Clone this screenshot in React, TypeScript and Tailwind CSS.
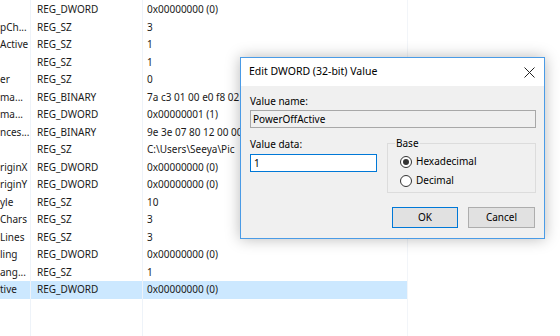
import React from "react";

const rows: [string, string, string][] = [
  ["", "REG_DWORD", "0x00000000 (0)"],
  ["pCh...", "REG_SZ", "3"],
  ["Active", "REG_SZ", "1"],
  ["", "REG_SZ", "1"],
  ["er", "REG_SZ", "0"],
  ["ma...", "REG_BINARY", "7a c3 01 00 e0 f8 02"],
  ["ma...", "REG_DWORD", "0x00000001 (1)"],
  ["nces...", "REG_BINARY", "9e 3e 07 80 12 00 00"],
  ["", "REG_SZ", "C:\\Users\\Seeya\\Pic"],
  ["riginX", "REG_DWORD", "0x00000000 (0)"],
  ["riginY", "REG_DWORD", "0x00000000 (0)"],
  ["yle", "REG_SZ", "10"],
  ["Chars", "REG_SZ", "3"],
  ["Lines", "REG_SZ", "3"],
  ["ling", "REG_DWORD", "0x00000000 (0)"],
  ["ang...", "REG_SZ", "1"],
  ["tive", "REG_DWORD", "0x00000000 (0)"],
];

const font = { fontFamily: '"Noto Sans", "Open Sans", sans-serif' };

export default function App() {
  return (
    <div
      className="relative w-[560px] h-[336px] overflow-hidden bg-white text-[#1a1a1a]"
      style={font}
    >
      {/* list */}
      <div className="relative w-[407px] h-full pt-[1px]">
        <div className="absolute left-[30px] top-0 bottom-0 w-px bg-[#eef3f9]" />
        <div className="absolute left-[142px] top-0 bottom-0 w-px bg-[#eef3f9]" />
        <div className="absolute left-[407px] top-0 bottom-0 w-px bg-[#f2f5f9]" />
        {rows.map(([n, t, d], i) => (
          <div
            key={i}
            className={
              "flex items-center h-[17.5px] text-[10px] leading-[17px] whitespace-nowrap " +
              (i === 16 ? "bg-[#cce8ff]" : "")
            }
          >
            <div className="w-[30px] overflow-hidden">{n}</div>
            <div className="w-[112px] pl-[7px] overflow-hidden">{t}</div>
            <div
              className={
                i >= 3 && i <= 13
                  ? "w-[98px] pl-[5px] overflow-hidden"
                  : "flex-1 pl-[5px] overflow-hidden"
              }
            >
              {d}
            </div>
          </div>
        ))}
      </div>

      {/* dialog */}
      <div className="absolute left-[240px] top-[57px] w-[305px] h-[182px] border border-[#4a9be6] bg-[#f0f0f0] shadow-[0_0_14px_rgba(0,0,0,0.28)] flex flex-col">
        <div className="h-[28px] bg-white flex items-center justify-between pl-[8px] pr-[9px] shrink-0">
          <span className="text-[10.5px] text-black">Edit DWORD (32-bit) Value</span>
          <svg width="11" height="11" viewBox="0 0 11 11">
            <path d="M0.5 0.5 L10.5 10.5 M10.5 0.5 L0.5 10.5" stroke="#222" strokeWidth="1" />
          </svg>
        </div>
        <div className="flex-1 pl-[9px] pr-[8px] pt-[8px] text-[10px] text-black">
          <div className="leading-[14px]">Value name:</div>
          <div className="mt-[2px] h-[18px] border border-[#a8a8a8] bg-[#f0f0f0] flex items-center pl-[2px] text-[10px]">
            PowerOffActive
          </div>
          <div className="flex mt-[9px]">
            <div className="w-[127px] flex flex-col">
              <div className="leading-[14px]">Value data:</div>
              <div className="mt-[3px] h-[18px] border border-[#0078d7] bg-white flex items-center pl-[3px]">
                1
              </div>
            </div>
            <div className="relative ml-[10px] w-[149px] h-[50px] border border-[#dcdcdc] mt-[6px]">
              <span className="absolute -top-[8px] left-[7px] px-[1px] bg-[#f0f0f0] leading-[14px]">Base</span>
              <div className="flex items-center mt-[11px] ml-[12px] gap-[4px]">
                <span className="w-[12px] h-[12px] rounded-full border border-[#333] bg-white flex items-center justify-center">
                  <span className="w-[6px] h-[6px] rounded-full bg-[#333]" />
                </span>
                <span className="leading-[13px]">Hexadecimal</span>
              </div>
              <div className="flex items-center mt-[6px] ml-[12px] gap-[4px]">
                <span className="w-[12px] h-[12px] rounded-full border border-[#333] bg-white" />
                <span className="leading-[13px]">Decimal</span>
              </div>
            </div>
          </div>
          <div className="flex justify-end gap-[10px] mt-[14px] pr-[1px]">
            <div className="w-[66px] h-[21px] border border-[#0078d7] bg-[#e1e1e1] flex items-center justify-center">
              OK
            </div>
            <div className="w-[67px] h-[21px] border border-[#adadad] bg-[#e1e1e1] flex items-center justify-center">
              Cancel
            </div>
          </div>
        </div>
      </div>
    </div>
  );
}
